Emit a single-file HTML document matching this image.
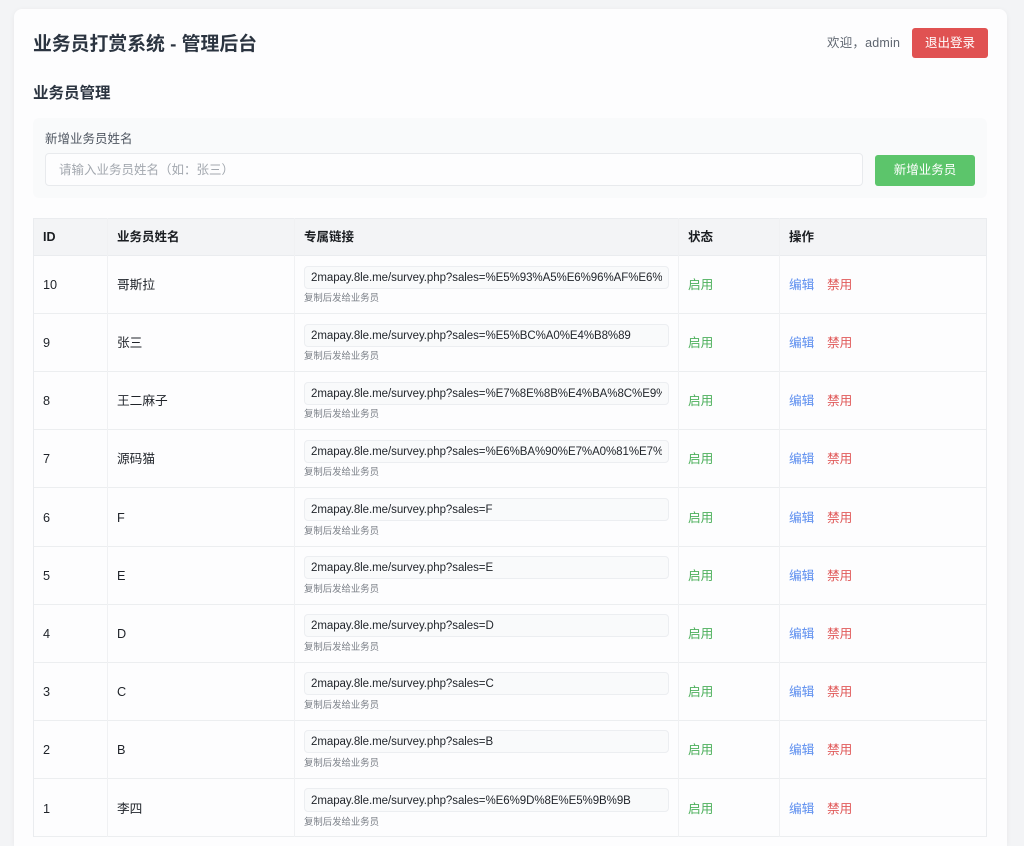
<!DOCTYPE html>
<html lang="zh-CN"><head><meta charset="utf-8"><title>业务员打赏系统</title>
<style>
*{box-sizing:border-box;margin:0;padding:0}
html,body{width:1024px;height:846px;overflow:hidden;background:#f3f4f6;font-family:"Liberation Sans","Noto Sans CJK SC",sans-serif;color:#1f2329}
#wrap{position:relative;width:1024px;height:846px;overflow:hidden}
.a{position:absolute;white-space:nowrap}
#card{position:absolute;left:14px;top:9px;width:993px;height:837px;background:#fdfdfe;border-radius:8px 8px 0 0;box-shadow:0 1px 6px rgba(0,0,0,.05)}
.row{position:absolute;left:33px;width:954px;border-bottom:1px solid #eceef0;--o:0px}
.c{position:absolute;white-space:nowrap;font-size:12.7px;line-height:20px;top:calc(18.5px + var(--o))}
.u{position:absolute;left:271px;top:10px;width:365px;height:23px;border:1px solid #eceef1;border-radius:4px;background:#f9fafb;font-size:11.5px;line-height:23px;padding:0 6px;white-space:nowrap;color:#1f2329;letter-spacing:-.06px}
.u span{display:block;overflow:hidden;height:21px}
.t{position:absolute;left:271px;top:calc(35px + var(--o));font-size:9.4px;line-height:13px;color:#7a7f87;white-space:nowrap}
.h{position:absolute;white-space:nowrap;top:227px;font-size:12.5px;line-height:20px;font-weight:700;color:#1a1d21}
.vl{position:absolute;top:218px;width:1px;height:619px;background:#f0f1f3}
</style></head><body>
<div id="wrap">
<div id="card"></div>
<div class="a" style="left:33px;top:31px;font-size:18.85px;line-height:26px;font-weight:700;color:#2b3440">业务员打赏系统 - 管理后台</div>
<div class="a" style="left:827px;top:33px;font-size:12.5px;line-height:20px;color:#5f6670;letter-spacing:.2px">欢迎，admin</div>
<div class="a" style="left:912px;top:28px;width:76px;height:30px;background:#e05252;border-radius:3px;color:#fff;font-size:12.5px;line-height:30px;text-align:center">退出登录</div>
<div class="a" style="left:33px;top:83px;font-size:15.5px;line-height:22px;font-weight:700;color:#2b3440">业务员管理</div>
<div class="a" style="left:33px;top:118px;width:954px;height:80px;background:#f9fafb;border-radius:6px"></div>
<div class="a" style="left:45px;top:130px;font-size:12.5px;line-height:18px;color:#4f5661">新增业务员姓名</div>
<div class="a" style="left:45px;top:153px;width:818px;height:33px;background:#fdfdfe;border:1px solid #e8eaed;border-radius:4px;font-size:12.5px;line-height:33px;padding-left:13px;color:#a3a8af">请输入业务员姓名（如：张三）</div>
<div class="a" style="left:875px;top:155px;width:100px;height:31px;background:#5cc56b;border-radius:3px;color:#fff;font-size:12.5px;line-height:31px;text-align:center">新增业务员</div>

<div class="a" style="left:33px;top:218px;width:954px;height:38px;background:#f3f4f6;border:1px solid #eaecef"></div>
<div class="h" style="left:43px">ID</div>
<div class="h" style="left:117px">业务员姓名</div>
<div class="h" style="left:304px">专属链接</div>
<div class="h" style="left:688px">状态</div>
<div class="h" style="left:789px">操作</div>

<div class="row" style="top:256px;height:58px"><div class="c" style="left:10px">10</div><div class="c" style="left:84px">哥斯拉</div><div class="u"><span>2mapay.8le.me/survey.php?sales=%E5%93%A5%E6%96%AF%E6%8B%89</span></div><div class="t">复制后发给业务员</div><div class="c" style="left:655px;color:#4caf5b">启用</div><div class="c" style="left:756px;color:#5b8def">编辑</div><div class="c" style="left:794px;color:#e05a5a">禁用</div></div>
<div class="row" style="top:314px;height:58px"><div class="c" style="left:10px">9</div><div class="c" style="left:84px">张三</div><div class="u"><span>2mapay.8le.me/survey.php?sales=%E5%BC%A0%E4%B8%89</span></div><div class="t">复制后发给业务员</div><div class="c" style="left:655px;color:#4caf5b">启用</div><div class="c" style="left:756px;color:#5b8def">编辑</div><div class="c" style="left:794px;color:#e05a5a">禁用</div></div>
<div class="row" style="top:372px;height:58px"><div class="c" style="left:10px">8</div><div class="c" style="left:84px">王二麻子</div><div class="u"><span>2mapay.8le.me/survey.php?sales=%E7%8E%8B%E4%BA%8C%E9%BA%BB%E5%AD%90</span></div><div class="t">复制后发给业务员</div><div class="c" style="left:655px;color:#4caf5b">启用</div><div class="c" style="left:756px;color:#5b8def">编辑</div><div class="c" style="left:794px;color:#e05a5a">禁用</div></div>
<div class="row" style="top:430px;height:58px"><div class="c" style="left:10px">7</div><div class="c" style="left:84px">源码猫</div><div class="u"><span>2mapay.8le.me/survey.php?sales=%E6%BA%90%E7%A0%81%E7%8C%AB</span></div><div class="t">复制后发给业务员</div><div class="c" style="left:655px;color:#4caf5b">启用</div><div class="c" style="left:756px;color:#5b8def">编辑</div><div class="c" style="left:794px;color:#e05a5a">禁用</div></div>
<div class="row" style="top:488px;height:59px;--o:1px"><div class="c" style="left:10px">6</div><div class="c" style="left:84px">F</div><div class="u"><span>2mapay.8le.me/survey.php?sales=F</span></div><div class="t">复制后发给业务员</div><div class="c" style="left:655px;color:#4caf5b">启用</div><div class="c" style="left:756px;color:#5b8def">编辑</div><div class="c" style="left:794px;color:#e05a5a">禁用</div></div>
<div class="row" style="top:546px;height:59px;--o:1px"><div class="c" style="left:10px">5</div><div class="c" style="left:84px">E</div><div class="u"><span>2mapay.8le.me/survey.php?sales=E</span></div><div class="t">复制后发给业务员</div><div class="c" style="left:655px;color:#4caf5b">启用</div><div class="c" style="left:756px;color:#5b8def">编辑</div><div class="c" style="left:794px;color:#e05a5a">禁用</div></div>
<div class="row" style="top:604px;height:59px;--o:1px"><div class="c" style="left:10px">4</div><div class="c" style="left:84px">D</div><div class="u"><span>2mapay.8le.me/survey.php?sales=D</span></div><div class="t">复制后发给业务员</div><div class="c" style="left:655px;color:#4caf5b">启用</div><div class="c" style="left:756px;color:#5b8def">编辑</div><div class="c" style="left:794px;color:#e05a5a">禁用</div></div>
<div class="row" style="top:662px;height:59px;--o:1px"><div class="c" style="left:10px">3</div><div class="c" style="left:84px">C</div><div class="u"><span>2mapay.8le.me/survey.php?sales=C</span></div><div class="t">复制后发给业务员</div><div class="c" style="left:655px;color:#4caf5b">启用</div><div class="c" style="left:756px;color:#5b8def">编辑</div><div class="c" style="left:794px;color:#e05a5a">禁用</div></div>
<div class="row" style="top:720px;height:59px;--o:1px"><div class="c" style="left:10px">2</div><div class="c" style="left:84px">B</div><div class="u"><span>2mapay.8le.me/survey.php?sales=B</span></div><div class="t">复制后发给业务员</div><div class="c" style="left:655px;color:#4caf5b">启用</div><div class="c" style="left:756px;color:#5b8def">编辑</div><div class="c" style="left:794px;color:#e05a5a">禁用</div></div>
<div class="row" style="top:778px;height:59px;--o:2px"><div class="c" style="left:10px">1</div><div class="c" style="left:84px">李四</div><div class="u" style="height:24px;line-height:25px"><span style="height:22px">2mapay.8le.me/survey.php?sales=%E6%9D%8E%E5%9B%9B</span></div><div class="t">复制后发给业务员</div><div class="c" style="left:655px;color:#4caf5b">启用</div><div class="c" style="left:756px;color:#5b8def">编辑</div><div class="c" style="left:794px;color:#e05a5a">禁用</div></div>

<div class="vl" style="left:33px;background:#eaecef"></div>
<div class="vl" style="left:107px"></div>
<div class="vl" style="left:294px"></div>
<div class="vl" style="left:678px"></div>
<div class="vl" style="left:779px"></div>
<div class="vl" style="left:986px;background:#eaecef"></div>
</div>
</body></html>
